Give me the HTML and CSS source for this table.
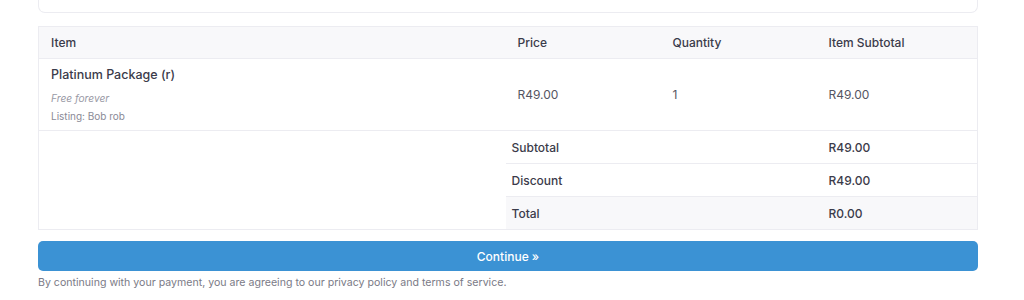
FILE: index.html
```html
<!DOCTYPE html>
<html lang="en">
<head>
<meta charset="utf-8">
<title>Checkout</title>
<link rel="stylesheet" href="styles.css">
</head>
<body>
<div class="page">
  <div class="card-tail"></div>

  <table class="order">
    <colgroup>
      <col class="c-item">
      <col class="c-price">
      <col class="c-qty">
      <col class="c-sub">
    </colgroup>
    <thead>
      <tr>
        <th>Item</th>
        <th>Price</th>
        <th>Quantity</th>
        <th>Item Subtotal</th>
      </tr>
    </thead>
    <tbody>
      <tr class="line">
        <td>
          <div class="name">Platinum Package (r)</div>
          <div class="term">Free forever</div>
          <div class="listing">Listing: Bob rob</div>
        </td>
        <td>R49.00</td>
        <td>1</td>
        <td>R49.00</td>
      </tr>
      <tr class="sum">
        <td class="blank" rowspan="3"></td>
        <td class="label" colspan="2">Subtotal</td>
        <td class="value">R49.00</td>
      </tr>
      <tr class="sum">
        <td class="label" colspan="2">Discount</td>
        <td class="value">R49.00</td>
      </tr>
      <tr class="sum total">
        <td class="label" colspan="2">Total</td>
        <td class="value">R0.00</td>
      </tr>
    </tbody>
  </table>

  <button class="continue" type="button">Continue »</button>
  <p class="terms">By continuing with your payment, you are agreeing to our privacy policy and terms of service.</p>
</div>
</body>
</html>
```

FILE: styles.css
```css
html, body {
  margin: 0;
  background: #ffffff;
}

body {
  font-family: "Inter", "Liberation Sans", sans-serif;
  color: #3b3b4a;
}

.page {
  padding: 0 46px 0 38px;
}

.card-tail {
  height: 12px;
  border: 1px solid #ececf1;
  border-top: none;
  border-radius: 0 0 7px 7px;
}

.order {
  width: 100%;
  margin-top: 13px;
  border-collapse: collapse;
  table-layout: fixed;
  border: 1px solid #ececf1;
  font-size: 12px;
}

.c-item { width: 467px; }
.c-price { width: 155px; }
.c-qty { width: 156px; }

.order th {
  height: 31px;
  padding: 0 12px;
  background: #f8f8fa;
  text-align: left;
  font-weight: 500;
  color: #3b3b4a;
  border-bottom: 1px solid #ececf1;
}

.line td {
  height: 71px;
  padding: 0 12px;
  color: #555562;
  border-bottom: 1px solid #ececf1;
}

.line .name {
  font-size: 12.5px;
  font-weight: 500;
  color: #3b3b4a;
}

.line .term {
  margin-top: 10px;
  font-size: 10.2px;
  font-style: italic;
  color: #9a9aa6;
}

.line .listing {
  margin-top: 6px;
  font-size: 10px;
  color: #8a8a96;
}

.sum td {
  height: 32px;
  padding: 0 12px;
  font-weight: 500;
  color: #3b3b4a;
}

.sum .label {
  padding-left: 6px;
  border-bottom: 1px solid #ececf1;
}

.sum .value {
  border-bottom: 1px solid #ececf1;
}

.sum .blank {
  border-bottom: none;
}

.total td.label,
.total td.value {
  background: #f8f8fa;
  border-bottom: none;
}

.continue {
  display: block;
  width: 100%;
  height: 30px;
  margin-top: 11px;
  border: none;
  border-radius: 5px;
  background: #3b92d4;
  color: #ffffff;
  font-family: inherit;
  font-size: 12px;
  font-weight: 500;
  cursor: pointer;
}

.terms {
  margin: 5px 0 0;
  font-size: 10.6px;
  color: #7a7a86;
}
```
